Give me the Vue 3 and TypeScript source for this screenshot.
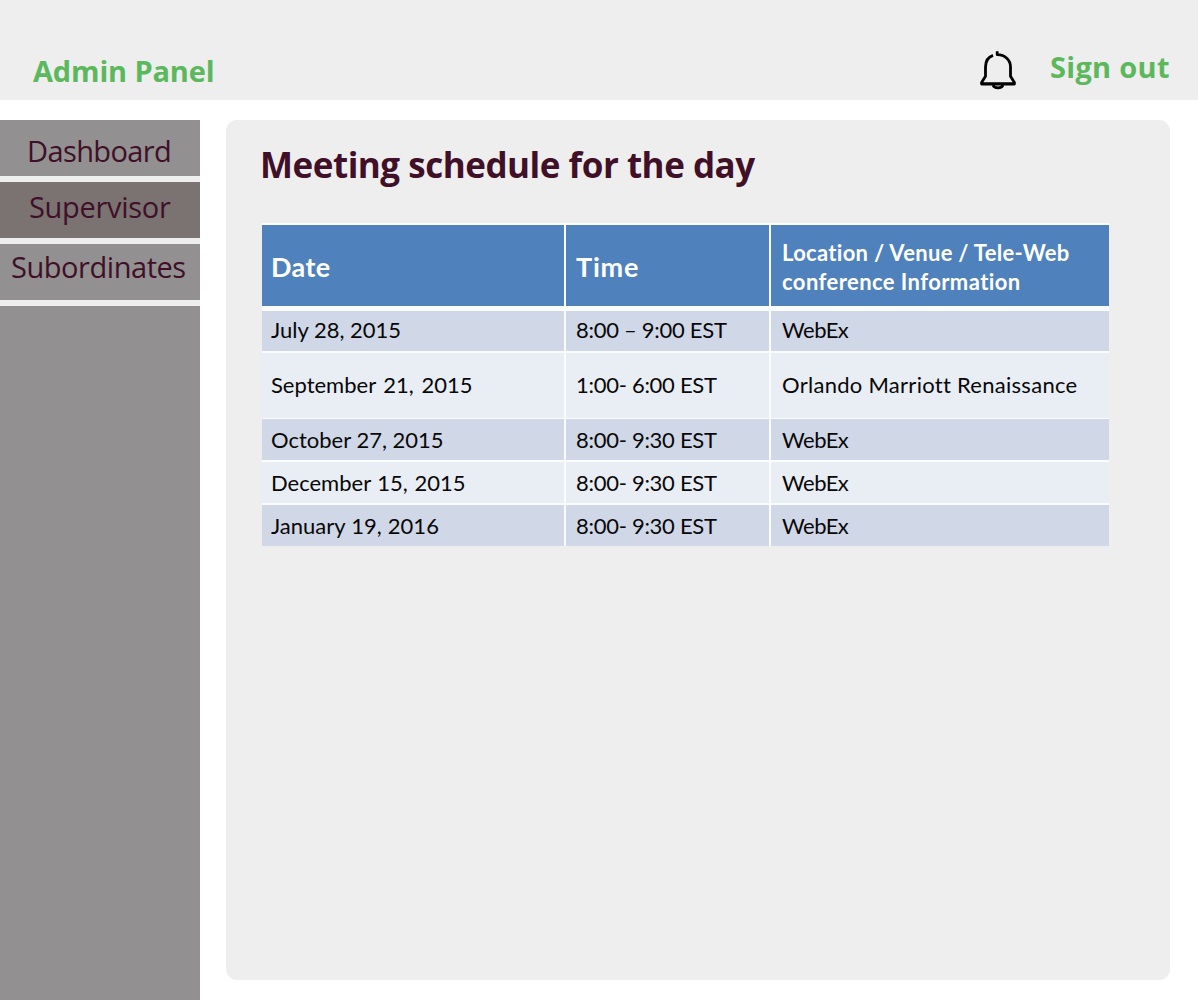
<script setup lang="ts">
interface NavItem {
  label: string
  key: string
}

interface Meeting {
  date: string
  time: string
  place: string
  key: string
}

const navItems: NavItem[] = [
  { label: 'Dashboard', key: 'dashboard' },
  { label: 'Supervisor', key: 'supervisor' },
  { label: 'Subordinates', key: 'subordinates' },
]

const meetings: Meeting[] = [
  { date: 'July 28, 2015', time: '8:00 – 9:00 EST', place: 'WebEx', key: 'jul' },
  { date: 'September 21, 2015', time: '1:00- 6:00 EST', place: 'Orlando Marriott Renaissance', key: 'sep' },
  { date: 'October 27, 2015', time: '8:00- 9:30 EST', place: 'WebEx', key: 'oct' },
  { date: 'December 15, 2015', time: '8:00- 9:30 EST', place: 'WebEx', key: 'dec' },
  { date: 'January 19, 2016', time: '8:00- 9:30 EST', place: 'WebEx', key: 'jan' },
]
</script>

<template>
  <div class="page">
    <header class="topbar">
      <div class="brand">Admin Panel</div>
      <div class="actions">
        <svg class="bell" width="38" height="40" viewBox="0 0 38 40" fill="none" stroke="#000" stroke-linejoin="round">
          <path d="M4 33.2H34" stroke="#777972" stroke-width="2.4" />
          <path
            d="M14 5.3C9 7 6.5 11.5 6.5 17V26.2L2.6 32.4V34H35.4V32.4L31.5 26.2V17C31.5 9.8 26 4.9 18.2 4.7V1.2"
            stroke-width="2.8"
          />
          <path d="M14 35C15.2 38.8 22.8 38.8 24 35" stroke-width="2.6" />
        </svg>
        <a class="signout">Sign out</a>
      </div>
    </header>
    <div class="body">
      <nav class="sidebar">
        <a v-for="item in navItems" :key="item.key" class="nav-item" :class="item.key">{{ item.label }}</a>
        <div class="nav-fill"></div>
      </nav>
      <main class="panel">
        <h1 class="title">Meeting schedule for the day</h1>
        <div class="schedule">
          <div class="row head">
            <div class="cell date"><span class="big d">Date</span></div>
            <div class="cell"><span class="big t">Time</span></div>
            <div class="cell place">
              <div class="venue"><div class="l1">Location / Venue / Tele-Web</div><div class="l2">conference Information</div></div>
            </div>
          </div>
          <div v-for="m in meetings" :key="m.key" class="row" :class="m.key">
            <div class="cell date"><span>{{ m.date }}</span></div>
            <div class="cell time"><span>{{ m.time }}</span></div>
            <div class="cell place"><span>{{ m.place }}</span></div>
          </div>
        </div>
      </main>
    </div>
  </div>
</template>

<style>
body {
  margin: 0;
  background: #fff;
}
</style>

<style scoped>
.page {
  width: 1200px;
  height: 1000px;
  overflow: hidden;
  font-family: "Open Sans", "Noto Sans", sans-serif;
  background: #fff;
}
.topbar {
  width: 1198px;
  height: 100px;
  box-sizing: border-box;
  padding: 0 28px 0 33px;
  display: flex;
  justify-content: space-between;
  background: #eee;
  color: #5cb85c;
  font-weight: 700;
  font-size: 29px;
  line-height: 40px;
  white-space: nowrap;
}
.brand {
  padding-top: 51px;
  letter-spacing: -0.15px;
}
.actions {
  display: flex;
}
.bell {
  margin: 50px 33px 0 0;
}
.signout {
  padding-top: 47px;
  width: 120px;
  letter-spacing: 0.3px;
}
.body {
  display: flex;
  height: 880px;
  padding-top: 20px;
}
.sidebar {
  width: 200px;
  display: flex;
  flex-direction: column;
  gap: 6px;
  background: #eee;
}
.nav-item {
  height: 56px;
  box-sizing: border-box;
  background: #929090;
  color: #3f1028;
  font-size: 29px;
  line-height: 40px;
  white-space: nowrap;
}
.nav-item.dashboard {
  padding: 11px 0 0 27px;
  letter-spacing: -0.6px;
}
.nav-item.supervisor {
  padding: 5px 0 0 29px;
  letter-spacing: -0.3px;
  background: #7a7372;
}
.nav-item.subordinates {
  padding: 3px 0 0 11px;
  letter-spacing: -0.45px;
}
.nav-fill {
  flex: 1;
  background: #929090;
}
.panel {
  width: 944px;
  height: 860px;
  box-sizing: border-box;
  margin-left: 26px;
  padding: 20px 0 0 36px;
  border-radius: 11px;
  background: #eee;
}
.title {
  margin: 0 0 0 -2px;
  height: 83px;
  font-size: 35px;
  line-height: 49px;
  font-weight: 700;
  letter-spacing: -0.48px;
  color: #3f1028;
  white-space: nowrap;
}
.schedule {
  width: 847px;
  padding-top: 2px;
  display: flex;
  flex-direction: column;
  gap: 2px;
  background: #fbfcfd;
  font-family: Lato, "Open Sans", sans-serif;
  font-variant-ligatures: none;
  font-size: 22px;
  line-height: 28px;
  color: #080808;
}
.row {
  display: grid;
  grid-template-columns: 302px 203px 1fr;
  column-gap: 2px;
  height: 41px;
}
.cell {
  display: flex;
  align-items: center;
  padding-left: 10px;
  background: #d0d7e7;
  white-space: nowrap;
}
.cell.date {
  padding-left: 9px;
}
.cell.place {
  padding-left: 11px;
}
.head {
  height: 81px;
  margin-bottom: 3px;
}
.head .cell {
  background: #4f81bc;
  color: #fff;
  font-weight: 700;
}
.big {
  font-size: 27px;
  padding-top: 3px;
  letter-spacing: 0.4px;
}
.big.t {
  letter-spacing: 0.8px;
}
.venue {
  line-height: 29px;
  padding-top: 3px;
}
.l1 {
  letter-spacing: 0.3px;
}
.l2 {
  letter-spacing: 0.42px;
}
.time span {
  letter-spacing: -0.28px;
}
.place span {
  letter-spacing: -0.5px;
}
.sep .place span {
  letter-spacing: 0.28px;
}
.sep .date span {
  word-spacing: 2px;
}
.dec .date span {
  word-spacing: 1px;
}
.jan .date span {
  word-spacing: 0.5px;
}
.jul {
  height: 40px;
}
.jul .cell {
  padding-bottom: 2px;
  height: 38px;
}
.sep .cell {
  padding-bottom: 1px;
}
.sep {
  height: 65px;
  margin-bottom: -1px;
}
.sep .cell,
.dec .cell {
  background: #e9edf4;
}
</style>
